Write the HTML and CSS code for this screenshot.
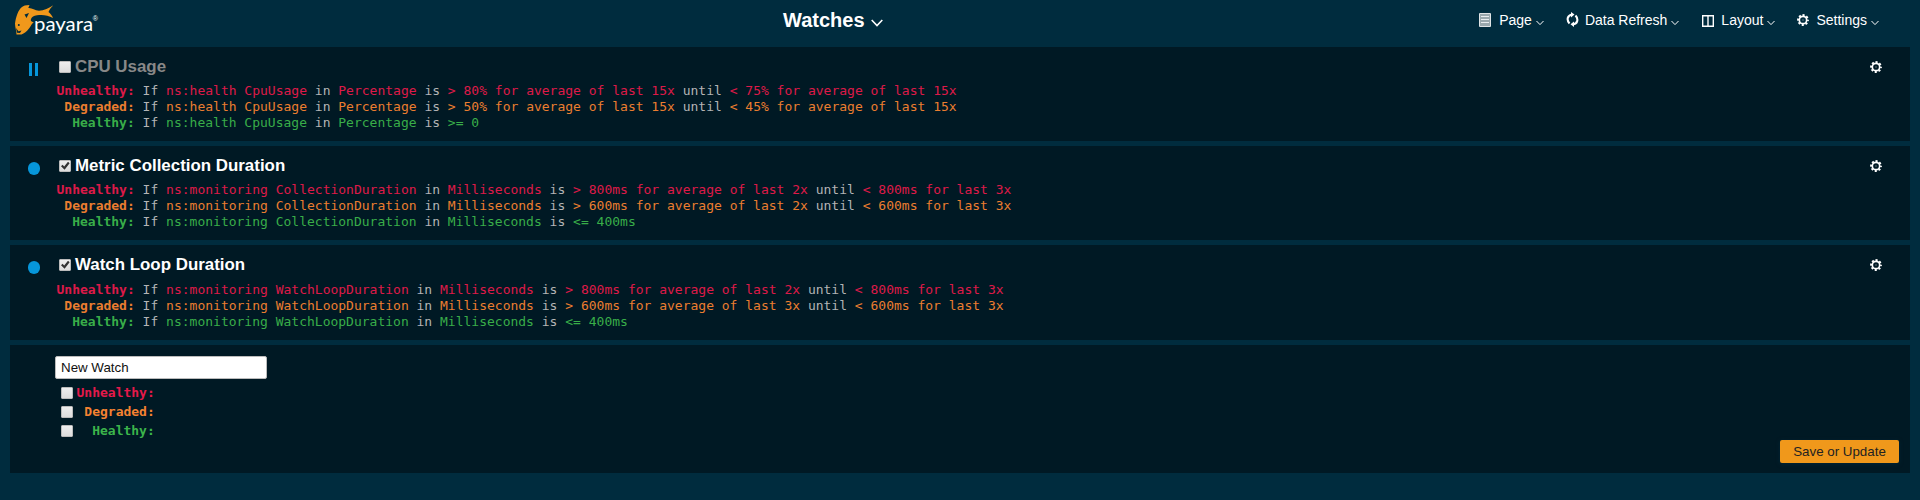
FILE: index.html
```html
<!DOCTYPE html>
<html lang="en">
<head>
<meta charset="utf-8">
<title>Watches</title>
<link rel="stylesheet" href="styles.css">
</head>
<body>
<svg width="0" height="0" class="defs">
  <symbol id="gear" viewBox="0 0 12 12">
    <circle cx="6" cy="6" r="3.700" fill="none" stroke="#fff" stroke-width="1.700"/>
    <circle cx="6" cy="6" r="4.950" fill="none" stroke="#fff" stroke-width="1.900" stroke-dasharray="2.100 1.788" stroke-dashoffset="1.050"/>
    <circle cx="6" cy="6" r="1" fill="#fff" opacity=".25"/>
  </symbol>
  <symbol id="chevron" viewBox="0 0 8 6"><path d="M.5 1L4 4.600L7.500 1" fill="none" stroke="#fff"/></symbol>
</svg>
<header class="topbar">
  <svg class="logo" width="86" height="36" viewBox="0 0 86 36">
    <path fill="#f0981b" d="M2.500 34.500C2.500 31 1 27 1 23.500C2 17 4 10 8 7C9.500 5.800 11.500 5 15.500 5L14.300 8C18 7.600 20.500 10.500 25 10.800C30 10.500 35 8 39.300 5.200C37 7.500 35.500 9.500 34.500 12C36.500 13.500 38 15.500 39 18C34 15 28 14.500 23 15.300C19.500 15.800 18 17 17 19C16.300 20.700 17 21.800 19.800 22.300C17.500 24 17 26 15 28.500C13 31.500 10 33.500 7.500 34.500Z"/>
    <path fill="#002c3e" d="M2 28l2.500 3.200 3-.7-1.500 2.500-3-.2zM10.500 14.500l4.500-1.500-2.500 5z"/>
    <circle cx="4.800" cy="25" r="1" fill="#002c3e"/>
    <text class="logo-text" x="20" y="31" textLength="59" lengthAdjust="spacingAndGlyphs">payara</text>
    <text class="logo-mark" x="78.700" y="21">®</text>
  </svg>
  <h1 class="page-title">Watches <svg width="12" height="8" viewBox="0 0 12 8"><path d="M.7 1L6 6.500L11.300 1" fill="none" stroke="#fff" stroke-width="1.600"/></svg></h1>
  <nav class="menu">
    <a class="item page"><svg class="icon" width="12" height="14" viewBox="0 0 12 14"><path fill="#9aa8ad" d="M1 1h10v12H1z"/><path d="M.5.5h11v13H.5z" fill="none" stroke="#dfe4e6"/><path d="M2 3.500h8M2 6.500h8M2 9.500h8" stroke="#e8ecee"/></svg><span>Page</span><svg class="chev" width="8" height="6"><use href="#chevron"/></svg></a>
    <a class="item refresh"><svg class="icon" width="13" height="15" viewBox="0 0 13 15"><path d="M6 2.700C1.500 3 .2 8 3.500 11.500M7 12.300C11.500 12 12.800 7 9.500 3.500" fill="none" stroke="#fff" stroke-width="2.100"/><path fill="#fff" d="M5 0v5.500l3.500-3zM8 9.500V15l-3.500-2.700z"/></svg><span>Data Refresh</span><svg class="chev" width="8" height="6"><use href="#chevron"/></svg></a>
    <a class="item layout"><svg class="icon" width="12" height="12" viewBox="0 0 12 12"><path d="M.7.7h10.600v10.600H.7zM6 1v10" fill="none" stroke="#fff" stroke-width="1.400"/></svg><span>Layout</span><svg class="chev" width="8" height="6"><use href="#chevron"/></svg></a>
    <a class="item settings"><svg class="icon" width="12" height="12"><use href="#gear"/></svg><span>Settings</span><svg class="chev" width="8" height="6"><use href="#chevron"/></svg></a>
  </nav>
</header>
<main class="watches">
  <section class="watch">
    <div class="state"><i class="paused"></i></div>
    <div class="body">
      <h2 class="name off"><input type="checkbox" class="check">CPU Usage</h2>
      <pre class="rules"><span class="red"><b>Unhealthy:</b> <i>If</i> ns:health CpuUsage <i>in</i> Percentage <i>is</i> &gt; 80% for average of last 15x <i>until</i> &lt; 75% for average of last 15x</span>
<span class="orange"> <b>Degraded:</b> <i>If</i> ns:health CpuUsage <i>in</i> Percentage <i>is</i> &gt; 50% for average of last 15x <i>until</i> &lt; 45% for average of last 15x</span>
<span class="green">  <b>Healthy:</b> <i>If</i> ns:health CpuUsage <i>in</i> Percentage <i>is</i> &gt;= 0</span></pre>
    </div>
    <svg class="gear" width="12" height="12"><use href="#gear"/></svg>
  </section>
  <section class="watch">
    <div class="state"><i class="running"></i></div>
    <div class="body">
      <h2 class="name"><input type="checkbox" class="check" checked>Metric Collection Duration</h2>
      <pre class="rules"><span class="red"><b>Unhealthy:</b> <i>If</i> ns:monitoring CollectionDuration <i>in</i> Milliseconds <i>is</i> &gt; 800ms for average of last 2x <i>until</i> &lt; 800ms for last 3x</span>
<span class="orange"> <b>Degraded:</b> <i>If</i> ns:monitoring CollectionDuration <i>in</i> Milliseconds <i>is</i> &gt; 600ms for average of last 2x <i>until</i> &lt; 600ms for last 3x</span>
<span class="green">  <b>Healthy:</b> <i>If</i> ns:monitoring CollectionDuration <i>in</i> Milliseconds <i>is</i> &lt;= 400ms</span></pre>
    </div>
    <svg class="gear" width="12" height="12"><use href="#gear"/></svg>
  </section>
  <section class="watch last">
    <div class="state"><i class="running"></i></div>
    <div class="body">
      <h2 class="name"><input type="checkbox" class="check" checked>Watch Loop Duration</h2>
      <pre class="rules"><span class="red"><b>Unhealthy:</b> <i>If</i> ns:monitoring WatchLoopDuration <i>in</i> Milliseconds <i>is</i> &gt; 800ms for average of last 2x <i>until</i> &lt; 800ms for last 3x</span>
<span class="orange"> <b>Degraded:</b> <i>If</i> ns:monitoring WatchLoopDuration <i>in</i> Milliseconds <i>is</i> &gt; 600ms for average of last 3x <i>until</i> &lt; 600ms for last 3x</span>
<span class="green">  <b>Healthy:</b> <i>If</i> ns:monitoring WatchLoopDuration <i>in</i> Milliseconds <i>is</i> &lt;= 400ms</span></pre>
    </div>
    <svg class="gear" width="12" height="12"><use href="#gear"/></svg>
  </section>
  <section class="editor">
    <input class="watch-name" type="text" value="New Watch">
    <label class="level red"><input type="checkbox" class="check"><b>Unhealthy:</b></label>
    <label class="level orange"><input type="checkbox" class="check"><b> Degraded:</b></label>
    <label class="level green"><input type="checkbox" class="check"><b>  Healthy:</b></label>
    <button class="save" type="button">Save or Update</button>
  </section>
</main>
</body>
</html>
```
FILE: styles.css
```css
* { box-sizing: border-box; }
body {
  margin: 0;
  height: 500px;
  overflow: hidden;
  background: #002c3e;
  color: #fff;
  font-family: "Liberation Sans", Arial, sans-serif;
}
.defs { display: none; }
.topbar {
  display: grid;
  grid-template-columns: 769px auto 1fr;
  height: 47px;
  padding: 0 41px 0 14px;
}
.logo { display: block; }
.logo-text { font: 20px "Lato", sans-serif; fill: #fff; }
.logo-mark { font: 7px "Liberation Sans", sans-serif; fill: #fff; }
.page-title {
  margin: 0;
  padding-top: 9px;
  font-size: 20px;
  line-height: 23px;
  white-space: nowrap;
}
.page-title svg { margin-left: 1px; }
.menu {
  display: flex;
  justify-content: flex-end;
  align-items: flex-start;
  padding-top: 12px;
  font-size: 14px;
  line-height: 16px;
}
.item { display: flex; margin-left: 22px; }
.icon { margin: 1px 8px 0 0; }
.refresh .icon { margin: 0 6px 0 0; }
.layout { margin-left: 23px; }
.layout .icon { margin: 3px 7px 0 0; }
.settings .icon { margin: 2px 7px 0 0; }
.chev { margin: 8px 0 0 4px; }
.watches {
  display: flex;
  flex-direction: column;
  gap: 5px;
  padding: 0 10px;
}
.watch {
  display: flex;
  height: 94px;
  background: #001924;
}
.watch.last { height: 95px; }
.state { width: 46px; padding: 16px 0 0 17.5px; }
.paused {
  display: block;
  width: 9px;
  height: 13px;
  margin-left: 1.500px;
  background: linear-gradient(90deg, #0696da 3.400px, transparent 3.400px 5.600px, #0696da 5.600px);
}
.running {
  display: block;
  width: 12.500px;
  height: 12.500px;
  border-radius: 50%;
  background: #0696da;
}
.body { flex: 1; }
.name {
  display: flex;
  align-items: flex-start;
  margin: 0;
  padding: 11px 0 0 3px;
  font-size: 16.900px;
  line-height: 18px;
}
.name .check { margin: 3px 4px 0 0; }
.off { color: #888; }
.rules {
  margin: 7px 0 0 .5px;
  font: 13px/16px "DejaVu Sans Mono", monospace;
}
.last .rules { margin-top: 8px; }
.rules i { font-style: normal; color: #bbb; }
.red { color: #e6194b; }
.orange { color: #f58231; }
.green { color: #3cb44b; }
.rules { opacity: .96; }
.gear { margin: 14px 28px 0 0; }
.check {
  appearance: none;
  flex: none;
  width: 12px;
  height: 12px;
  margin: 0;
  border: 1px solid #bbb;
  border-radius: 1px;
  background: linear-gradient(#eee, #ddd);
}
.check:checked::before {
  content: "";
  display: block;
  width: 10px;
  height: 10px;
  background: #333;
  clip-path: polygon(10% 52%, 26% 38%, 42% 54%, 80% 8%, 96% 22%, 46% 88%);
}
.editor {
  display: flex;
  flex-direction: column;
  align-items: flex-start;
  height: 128px;
  padding: 11px 11px 0 45px;
  background: #001924;
}
.watch-name {
  width: 212px;
  height: 23px;
  margin-bottom: 5px;
  padding: 0 5px;
  border: 1px solid #bbb;
  border-radius: 2px;
  background: #fff;
  color: #111;
  font: 13.333px "Liberation Sans", Arial, sans-serif;
}
.level {
  display: flex;
  align-items: flex-start;
  height: 19px;
  padding-left: 6px;
  font: 13px/18px "DejaVu Sans Mono", monospace;
  white-space: pre;
}
.level .check { margin: 3px 3.500px 0 0; }
.save {
  align-self: flex-end;
  width: 119px;
  height: 23px;
  margin-top: -1px;
  padding: 0;
  border: 0;
  border-radius: 2px;
  background: #f0981b;
  box-shadow: 0 1px 4px rgba(0, 44, 62, .7);
  color: #222;
  font: 13.333px "Liberation Sans", Arial, sans-serif;
}
```
